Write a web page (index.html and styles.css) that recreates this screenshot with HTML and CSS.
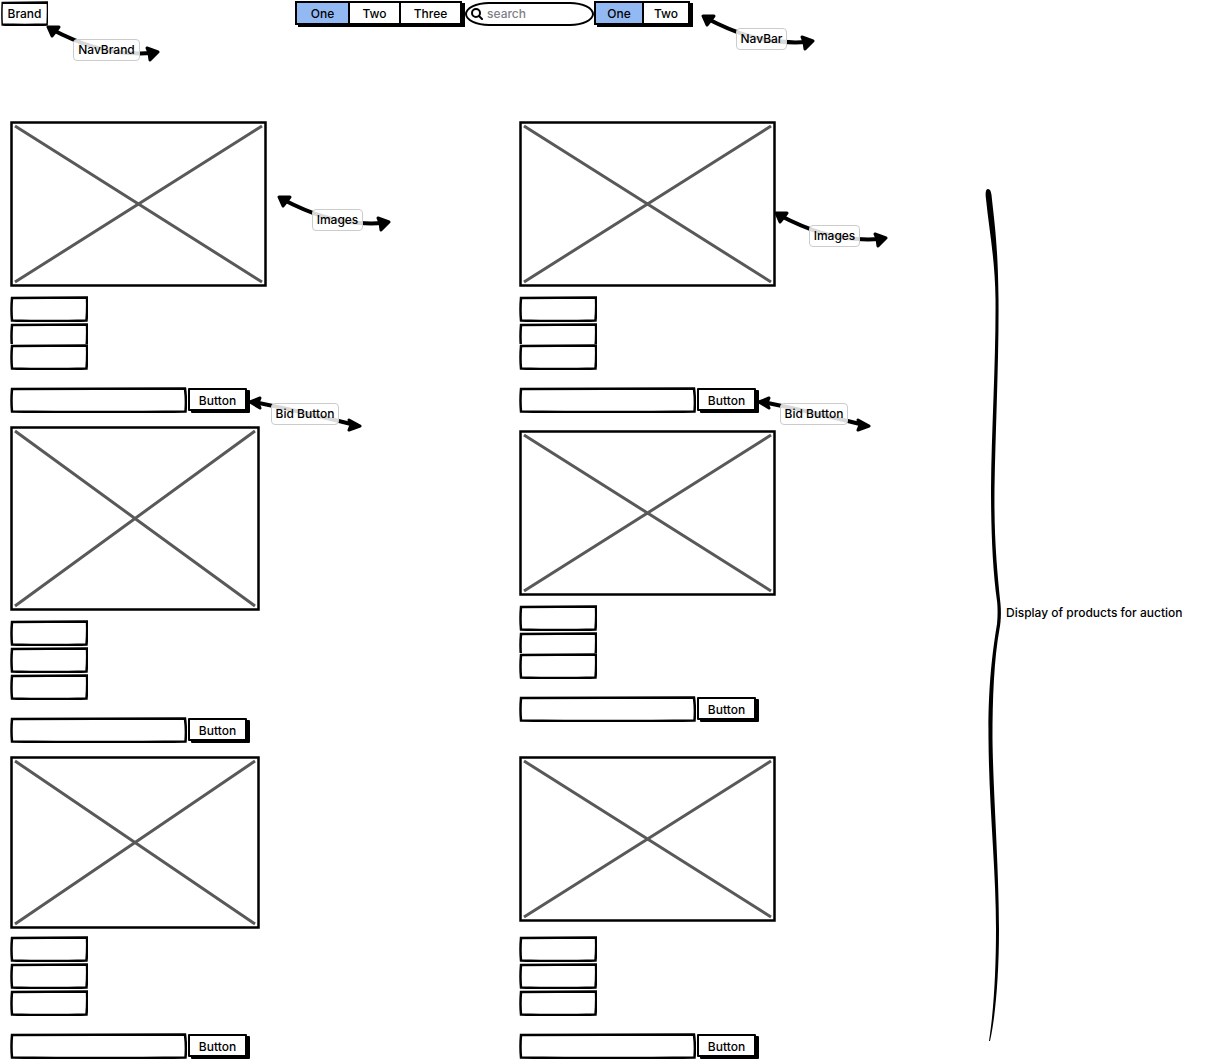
FILE: index.html
```html
<!DOCTYPE html>
<html lang="en">
<head>
<meta charset="utf-8">
<meta name="viewport" content="width=device-width, initial-scale=1">
<title>Auction wireframe</title>
<link rel="stylesheet" href="styles.css">
</head>
<body>
<svg class="defs" aria-hidden="true">
  <symbol id="curve" viewBox="0 0 114 38">
    <path d="M5 4C28 16 60 31 106 28" fill="none" stroke="#000" stroke-width="4"/>
    <path d="M2 2L13 2L10 6L6 11Z M112 27L101 23L103 28L104 35Z" stroke="#000" stroke-width="3" stroke-linejoin="round"/>
  </symbol>
  <symbol id="straight" viewBox="0 0 114 38">
    <path d="M6 7Q55 17 107 30" fill="none" stroke="#000" stroke-width="4"/>
    <path d="M2 7L12 3L10 8L12 13Z M112 31L101 25L103 30L101 35Z" stroke="#000" stroke-width="3" stroke-linejoin="round"/>
  </symbol>
</svg>
<header class="header">
  <div class="brand-cell">
    <a class="brand sketch" href="#">Brand
      <span class="note note-brand"><svg><use href="#curve"/></svg><span class="note-label">NavBrand</span></span>
    </a>
  </div>
  <nav class="nav">
    <div class="group">
      <button class="on" type="button">One</button><button type="button">Two</button><button class="roomy" type="button">Three</button>
    </div>
    <label class="search">
      <svg width="12" height="12" viewBox="0 0 12 12" role="img" aria-label="Search"><circle cx="5" cy="5" r="4" fill="none" stroke="#000" stroke-width="2"/><path d="M8 8L11 11" stroke="#000" stroke-width="2" stroke-linecap="round"/></svg>
      <input type="search" placeholder="search">
    </label>
    <div class="group group-small">
      <button class="on" type="button">One</button><button type="button">Two</button>
    </div>
    <span class="note note-nav"><svg><use href="#curve"/></svg><span class="note-label">NavBar</span></span>
  </nav>
</header>
<main class="main">
  <section class="products">
    <article class="card">
      <div class="photo">
        <svg viewBox="0 0 257 166"><rect x="1.5" y="1.5" width="254" height="163"/><path d="M5 5L252 161M252 5L5 161"/></svg>
        <span class="note note-photo"><svg><use href="#curve"/></svg><span class="note-label">Images</span></span>
      </div>
      <div class="tags tight"><div class="tag sketch"></div><div class="tag sketch"></div><div class="tag sketch"></div></div>
      <form class="bid"><input class="sketch-wide" type="text" aria-label="Bid"><button type="button">Button</button>
        <span class="note note-bid"><svg><use href="#straight"/></svg><span class="note-label">Bid Button</span></span></form>
    </article>
    <article class="card">
      <div class="photo">
        <svg viewBox="0 0 257 166"><rect x="1.5" y="1.5" width="254" height="163"/><path d="M5 5L252 161M252 5L5 161"/></svg>
        <span class="note note-photo note-near"><svg><use href="#curve"/></svg><span class="note-label">Images</span></span>
      </div>
      <div class="tags tight"><div class="tag sketch"></div><div class="tag sketch"></div><div class="tag sketch"></div></div>
      <form class="bid"><input class="sketch-wide" type="text" aria-label="Bid"><button type="button">Button</button>
        <span class="note note-bid"><svg><use href="#straight"/></svg><span class="note-label">Bid Button</span></span></form>
    </article>
    <article class="card">
      <div class="photo narrow">
        <svg viewBox="0 0 250 185"><rect x="1.5" y="1.5" width="247" height="182"/><path d="M5 5L245 180M245 5L5 180"/></svg>
      </div>
      <div class="tags"><div class="tag sketch"></div><div class="tag sketch"></div><div class="tag sketch"></div></div>
      <form class="bid"><input class="sketch-wide" type="text" aria-label="Bid"><button type="button">Button</button></form>
    </article>
    <article class="card lowered">
      <div class="photo">
        <svg viewBox="0 0 257 166"><rect x="1.5" y="1.5" width="254" height="163"/><path d="M5 5L252 161M252 5L5 161"/></svg>
      </div>
      <div class="tags tight"><div class="tag sketch"></div><div class="tag sketch"></div><div class="tag sketch"></div></div>
      <form class="bid"><input class="sketch-wide" type="text" aria-label="Bid"><button type="button">Button</button></form>
    </article>
    <article class="card snug">
      <div class="photo narrow">
        <svg viewBox="0 0 250 173"><rect x="1.5" y="1.5" width="247" height="170"/><path d="M5 5L245 168M245 5L5 168"/></svg>
      </div>
      <div class="tags"><div class="tag sketch"></div><div class="tag sketch"></div><div class="tag sketch"></div></div>
      <form class="bid"><input class="sketch-wide" type="text" aria-label="Bid"><button type="button">Button</button></form>
    </article>
    <article class="card snug">
      <div class="photo">
        <svg viewBox="0 0 257 166"><rect x="1.5" y="1.5" width="254" height="163"/><path d="M5 5L252 161M252 5L5 161"/></svg>
      </div>
      <div class="tags"><div class="tag sketch"></div><div class="tag sketch"></div><div class="tag sketch"></div></div>
      <form class="bid"><input class="sketch-wide" type="text" aria-label="Bid"><button type="button">Button</button></form>
    </article>
  </section>
  <aside class="aside">
    <svg class="brace" viewBox="0 0 17 852" preserveAspectRatio="none" aria-hidden="true"><path d="M3 0C5 0 6 2 6.500 6C9 30 13 55 13.500 110C14 170 10.500 240 9.500 300C9 350 12 380 15.500 415C16.500 425 15.500 435 14.500 440C9 470 7.500 510 7.500 550C8 600 14 680 14 740C14 790 10 830 5 852L4 852C9 820 11 780 11 740C11 680 4 620 3.500 550C3 500 7 465 12 435C13 425 12.500 415 12 412C7.500 380 6 340 6 300C6.500 240 11 170 10.500 110C10 70 4 40 1 10C0 3 1 0 3 0Z"/></svg>
    <p>Display of products for auction</p>
  </aside>
</main>
</body>
</html>
```
FILE: styles.css
```css
* { box-sizing: border-box; }

body {
  margin: 0;
  background: #fff;
  color: #000;
  font: 500 12px/16px Inter, "Liberation Sans", sans-serif;
}

button, input { font: inherit; color: inherit; margin: 0; }
.defs { position: absolute; width: 0; height: 0; }

/* hand-drawn frames */
.sketch {
  background: url("data:image/svg+xml,%3Csvg xmlns='http://www.w3.org/2000/svg' viewBox='0 0 78 26' preserveAspectRatio='none'%3E%3Cpath d='M2 2Q40 1.500 77 1.500Q77.500 13 76.500 24.500Q40 25.500 2 24.500Q1 14 2 2Z' fill='none' stroke='%23000' stroke-width='2.500'/%3E%3C/svg%3E") center / 100% 100% no-repeat;
}
.sketch-wide {
  background: url("data:image/svg+xml,%3Csvg xmlns='http://www.w3.org/2000/svg' viewBox='0 0 177 26' preserveAspectRatio='none'%3E%3Cpath d='M2 2Q80 2 175 1.500Q176.500 13 175.500 24.500Q90 25.500 2 24.500Q1 14 2 2Z' fill='none' stroke='%23000' stroke-width='2.500'/%3E%3C/svg%3E") center / 100% 100% no-repeat;
}

/* header */
.header {
  display: grid;
  grid-template-columns: 295fr 910fr;
  padding-top: 1px;
}
.brand-cell { padding-left: 1px; }
.brand {
  position: relative;
  display: block;
  width: 47px;
  height: 25px;
  padding: 5px 0;
  color: inherit;
  text-align: center;
  text-decoration: none;
}
.nav {
  position: relative;
  display: flex;
  width: max-content;
}
.group {
  display: flex;
  height: 24px;
  margin-right: 3px;
  border: 2px solid #000;
  box-shadow: 3px 2px #000;
}
.group button {
  width: 51px;
  padding: 2px 0 0;
  border: 0;
  background: #fff;
}
.group button + button { border-left: 2px solid #000; }
.group .roomy { width: 61px; }
.group .on { background: #93b9f3; }
.group-small button { width: 46px; }
.search {
  display: flex;
  align-items: center;
  gap: 4px;
  width: 129px;
  height: 24px;
  margin-top: 1px;
  padding: 0 4px;
  border: 2px solid #000;
  border-radius: 24px / 12px;
}
.search svg { flex: none; }
.search input {
  min-width: 0;
  flex: 1;
  padding: 0;
  border: 0;
  outline: 0;
  background: none;
}
.search ::placeholder { color: #808088; opacity: 1; }

/* annotations */
.note {
  position: absolute;
  left: 100%;
  z-index: 1;
  display: grid;
  grid-template-columns: 114px;
}
.note > * { grid-area: 1 / 1; }
.note svg { width: 114px; height: 38px; }
.note-label {
  place-self: end center;
  margin: 0 0 2px 7px;
  padding: 1px 4px;
  border: 1px solid #ccc;
  border-radius: 4px;
  background: rgba(255, 255, 255, .85);
  line-height: 18px;
  white-space: nowrap;
}
.note-brand { top: 24px; margin-left: -2px; }
.note-nav { top: 13px; margin-left: 8px; }
.note-photo { top: 74px; margin-left: 10px; }
.note-near { top: 90px; margin-left: -2px; }
.note-bid { top: 8px; margin-left: -2px; }
.note-bid .note-label { place-self: center; margin: 0; }

/* products */
.main {
  display: grid;
  grid-template-columns: 975fr 220fr;
  margin-top: 95px;
  padding-left: 10px;
}
.products {
  display: grid;
  grid-template-columns: 509fr 466fr;
  row-gap: 13px;
}
.card { display: flex; flex-direction: column; align-items: flex-start; }
.lowered { padding-top: 4px; align-self: start; }
.photo { position: relative; width: 257px; }
.photo.narrow { width: 250px; }
.photo > svg { display: block; width: 100%; fill: none; stroke-width: 3; stroke: #595959; }
.photo rect { stroke: #000; stroke-width: 2.5; }
.tags {
  display: grid;
  gap: 1px;
  margin-top: auto;
  padding-top: 9px;
}
.snug .tags { padding-top: 7px; }
.tag { width: 78px; height: 26px; }
.tight .tag:last-child { margin-top: -6px; background-color: #fff; }
.bid {
  position: relative;
  display: flex;
  gap: 1px;
  margin-top: 17px;
}
.bid input {
  width: 177px;
  height: 26px;
  padding: 0 8px;
  border: 0;
}
.bid button {
  width: 59px;
  height: 23px;
  margin: 1px 3px 2px 0;
  padding: 2px 0 0;
  border: 2px solid #000;
  border-radius: 1px;
  background: #fff;
  box-shadow: 3px 2px #000;
}

/* side caption */
.aside {
  display: flex;
  align-items: center;
  gap: 4px;
  padding: 68px 0 18px;
}
.brace { flex: none; align-self: stretch; width: 17px; }
.aside p { margin: 0; padding-bottom: 4px; }
```
